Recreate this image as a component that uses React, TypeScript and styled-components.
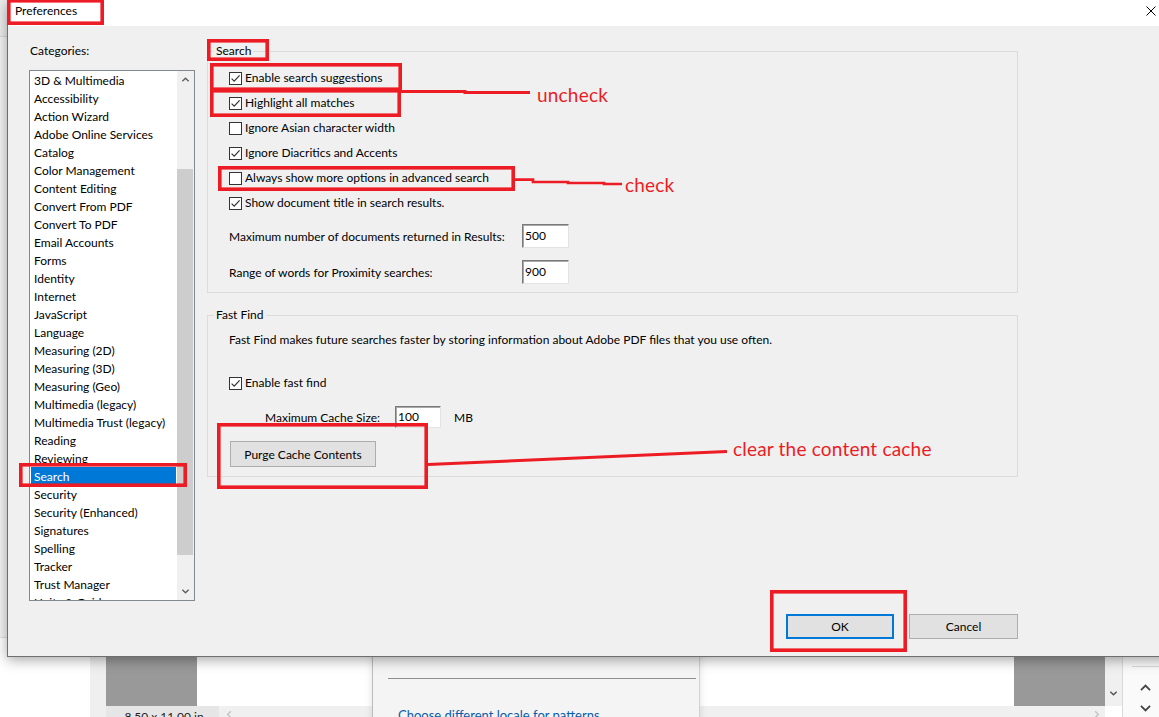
import React from 'react';
import styled, { createGlobalStyle } from 'styled-components';

const UI_FONT = 'Lato, "Noto Sans", "Liberation Sans", sans-serif';
const MARK_RED = '#ed1c24';

const GlobalStyle = createGlobalStyle`
  html, body { margin: 0; padding: 0; }
  body {
    width: 1159px;
    height: 717px;
    overflow: hidden;
    background: #fff;
    color: #000;
    font-family: ${UI_FONT};
    font-size: 12px;
  }
  #root { width: 1159px; height: 717px; }
`;

type Dir = 'up' | 'down' | 'left' | 'right';

const chevronPaths: Record<Dir, string> = {
  up: 'M1.5 7 L5 3.5 L8.5 7',
  down: 'M1.5 3 L5 6.5 L8.5 3',
  left: 'M6.5 1.5 L3 5 L6.5 8.5',
  right: 'M3.5 1.5 L7 5 L3.5 8.5',
};

const Chevron = ({ dir, size = 9, color = '#606060', weight = 1.6 }: { dir: Dir; size?: number; color?: string; weight?: number }) => (
  <svg width={size} height={size} viewBox="0 0 10 10" fill="none">
    <path d={chevronPaths[dir]} stroke={color} strokeWidth={weight} />
  </svg>
);

/* ---------- the Acrobat window behind the dialog ---------- */

const Desktop = styled.div`
  position: relative;
  width: 1159px;
  height: 717px;
  overflow: hidden;
`;

const AppShell = styled.div`
  display: flex;
  height: 728px;
  background: #fff;
`;

const NavPane = styled.div`
  width: 90px;
  flex-shrink: 0;
  background: #fff;
  display: flex;
  flex-direction: column;
`;

const NavHeader = styled.div`
  height: 36px;
  background: #ececec;
  border-bottom: 1px solid #d6d6d6;
`;

const NavStrip = styled.div`
  height: 600px;
  background: #f4f4f4;
  border-bottom: 1px solid #e2e2e2;
`;

const NavGutter = styled.div`
  width: 16px;
  flex-shrink: 0;
  background: #efefef;
`;

const DocView = styled.div`
  position: relative;
  flex: 1;
  min-width: 0;
  display: flex;
  flex-direction: column;
  background: #fff;
`;

const PageRow = styled.div`
  flex: 1;
  display: flex;
  justify-content: space-between;
  align-items: flex-end;
`;

const PageSheet = styled.div`
  width: 91px;
  height: 180px;
  background: #999;
`;

const DocStatus = styled.div`
  height: 22px;
  display: flex;
  align-items: flex-start;
  background: #f0f0f0;
`;

const SizeTag = styled.div`
  width: 113px;
  height: 100%;
  background: #e6e6e6;
  font-size: 12px;
  line-height: 16px;
  padding: 3px 0 0 3px;
  box-sizing: border-box;
  text-align: center;
  color: #222;
`;

const StatusArrow = styled.div<{ $end?: boolean }>`
  display: flex;
  padding-top: 4px;
  margin: ${p => (p.$end ? '0 4px 0 auto' : '0 0 0 6px')};
`;

const SidePanel = styled.div`
  position: absolute;
  left: 266px;
  top: 0;
  bottom: 0;
  width: 328px;
  box-sizing: border-box;
  background: #f4f4f4;
  border-left: 1px solid #bdbdbd;
  border-right: 1px solid #d2d2d2;
  box-shadow: 0 0 8px rgba(0, 0, 0, 0.12);
  display: flex;
  flex-direction: column;
  justify-content: flex-end;
  padding: 0 3px 4px 15px;
`;

const PanelRule = styled.div`
  border-top: 1px solid #8f8f8f;
  margin-bottom: 27px;
`;

const PanelLink = styled.div`
  padding-left: 10px;
  font-size: 13px;
  line-height: 18px;
  color: #0b5cad;
`;

const VScroll = styled.div`
  width: 17px;
  flex-shrink: 0;
  display: flex;
  flex-direction: column;
`;

const VTrack = styled.div`
  flex: 1;
  background: #f0f0f0;
  display: flex;
  flex-direction: column;
  justify-content: flex-end;
  align-items: center;
  padding-bottom: 4px;
`;

const VCorner = styled.div`
  height: 22px;
  background: #fff;
`;

const RightRail = styled.div`
  width: 37px;
  flex-shrink: 0;
  box-sizing: border-box;
  border-left: 1px solid #dadada;
  background: #fafafa;
  display: flex;
  flex-direction: column;
  justify-content: flex-end;
  align-items: center;
  padding-bottom: 13px;
`;

const RailIcon = styled.div`
  width: 22px;
  height: 20px;
  box-sizing: border-box;
  border: 2px solid #5b5bd6;
  margin-left: 10px;
`;

const RailRule = styled.div`
  align-self: stretch;
  margin: 12px 0 6px 9px;
  border-top: 1px solid #d8d8d8;
`;

const RailButton = styled.div`
  height: 14px;
  display: flex;
  align-items: center;
  justify-content: center;
  margin-top: 7px;
  margin-left: 8px;
`;

/* ---------- Preferences dialog ---------- */

const Dialog = styled.div`
  position: absolute;
  left: 7px;
  top: 0;
  width: 1168px;
  height: 657px;
  box-sizing: border-box;
  border: 1px solid #6f6f6f;
  border-top: none;
  background: #f0f0f0;
  box-shadow: 0 3px 12px rgba(0, 0, 0, 0.35);
  display: flex;
  flex-direction: column;
`;

const TitleBar = styled.div`
  height: 26px;
  flex-shrink: 0;
  background: #fff;
  display: flex;
  align-items: flex-start;
`;

const TitleText = styled.div`
  padding: 3px 0 0 7px;
  font-size: 12px;
  line-height: 16px;
`;

const CloseButton = styled.div`
  margin-left: auto;
  width: 46px;
  height: 22px;
  display: flex;
  align-items: center;
  justify-content: center;
`;

const DialogBody = styled.div`
  flex: 1;
  min-height: 0;
  display: grid;
  grid-template-columns: 166px 811px;
  grid-template-rows: 1fr auto;
  column-gap: 12px;
  padding: 17px 0 17px 21px;
`;

const CategoryColumn = styled.div`
  display: flex;
  flex-direction: column;
`;

const PlainLabel = styled.div`
  font-size: 12px;
  line-height: 16px;
`;

const CategoryCaption = styled(PlainLabel)`
  padding-left: 1px;
  margin-bottom: 11px;
`;

const CategoryList = styled.div`
  width: 166px;
  height: 531px;
  box-sizing: border-box;
  border: 1px solid #828790;
  background: #fff;
  display: flex;
  overflow: hidden;
`;

const ListItems = styled.div`
  flex: 1;
  min-width: 0;
`;

const ListItem = styled.div<{ $selected?: boolean }>`
  height: 17px;
  line-height: 17px;
  padding: 1px 0 0 3px;
  margin: 0 1px;
  white-space: nowrap;
  font-size: 12px;
  background: ${p => (p.$selected ? '#0078d7' : 'transparent')};
  color: ${p => (p.$selected ? '#fff' : '#000')};
`;

const ListScrollbar = styled.div`
  width: 17px;
  flex-shrink: 0;
  background: #f0f0f0;
  display: flex;
  flex-direction: column;
`;

const ScrollButton = styled.div`
  height: 17px;
  display: flex;
  align-items: center;
  justify-content: center;
`;

const ScrollThumb = styled.div`
  margin: 81px 1px 0 0;
  height: 386px;
  background: #cdcdcd;
`;

const ScrollSpacer = styled.div`
  flex: 1;
`;

const SettingsColumn = styled.div`
  display: flex;
  flex-direction: column;
`;

const GroupBox = styled.fieldset<{ $gap?: number }>`
  margin: ${p => p.$gap ?? 0}px 0 0 0;
  border: 1px solid #dcdcdc;
  padding: 0 0 ${p => (p.$gap ? 9 : 8)}px 6px;
  min-width: 0;
`;

const GroupTitle = styled.legend`
  padding: 0 2px;
  font-size: 12px;
  line-height: 16px;
`;

const GroupBody = styled.div<{ $top: number }>`
  display: flex;
  flex-direction: column;
  align-items: flex-start;
  padding: ${p => p.$top}px 0 0 15px;
`;

const CheckRow = styled.div<{ $gap?: number }>`
  display: flex;
  align-items: center;
  gap: 3px;
  height: 25px;
  margin-top: ${p => p.$gap ?? 0}px;
  font-size: 12px;
`;

const Box = styled.span`
  width: 13px;
  height: 13px;
  box-sizing: border-box;
  border: 1px solid #333;
  background: #fff;
  display: inline-flex;
  align-items: center;
  justify-content: center;
  flex-shrink: 0;
  margin-top: 1px;
`;

const FieldRow = styled.div<{ $gap: number; $indent?: number; $height: number }>`
  display: flex;
  align-items: center;
  height: ${p => p.$height}px;
  margin-top: ${p => p.$gap}px;
  padding-left: ${p => p.$indent ?? 0}px;
  font-size: 12px;
`;

const FieldLabel = styled.span<{ $width: number }>`
  width: ${p => p.$width}px;
  flex-shrink: 0;
  white-space: nowrap;
`;

const NumberBox = styled.div<{ $width: number; $height: number }>`
  width: ${p => p.$width}px;
  height: ${p => p.$height}px;
  box-sizing: border-box;
  background: #fff;
  border: 1px solid;
  border-color: #7a7a7a #e3e3e3 #e3e3e3 #7a7a7a;
  box-shadow: inset 1px 1px 0 #a8a8a8;
  display: flex;
  align-items: center;
  padding: 0 0 1px 2px;
  font-size: 12px;
`;

const Unit = styled.span`
  margin-left: 13px;
`;

const Description = styled(PlainLabel)`
  white-space: nowrap;
`;

const PushButton = styled.div<{ $width: number; $default?: boolean }>`
  width: ${p => p.$width}px;
  height: ${p => (p.$default ? 25 : 26)}px;
  box-sizing: border-box;
  background: #e1e1e1;
  border: ${p => (p.$default ? '2px solid #0078d7' : '1px solid #adadad')};
  display: flex;
  align-items: center;
  justify-content: center;
  font-size: 12px;
`;

const PurgeButton = styled(PushButton)`
  margin: 13px 0 0 1px;
`;

const DialogFooter = styled.div`
  grid-column: 2;
  display: flex;
  justify-content: flex-end;
  gap: 15px;
`;

const FooterButton = styled(PushButton)`
  height: 25px;
`;

/* ---------- red markup drawn over the screenshot ---------- */

const Markup = styled.svg`
  position: absolute;
  left: 0;
  top: 0;
  width: 1159px;
  height: 717px;
  pointer-events: none;
`;

const MarkLabel = styled.span<{ $x: number; $y: number }>`
  position: absolute;
  left: ${p => p.$x}px;
  top: ${p => p.$y}px;
  font-size: 19px;
  line-height: 19px;
  letter-spacing: 0.2px;
  color: ${MARK_RED};
  white-space: nowrap;
`;

const categories = [
  '3D & Multimedia',
  'Accessibility',
  'Action Wizard',
  'Adobe Online Services',
  'Catalog',
  'Color Management',
  'Content Editing',
  'Convert From PDF',
  'Convert To PDF',
  'Email Accounts',
  'Forms',
  'Identity',
  'Internet',
  'JavaScript',
  'Language',
  'Measuring (2D)',
  'Measuring (3D)',
  'Measuring (Geo)',
  'Multimedia (legacy)',
  'Multimedia Trust (legacy)',
  'Reading',
  'Reviewing',
  'Search',
  'Security',
  'Security (Enhanced)',
  'Signatures',
  'Spelling',
  'Tracker',
  'Trust Manager',
  'Units & Guides',
];

const searchOptions = [
  { label: 'Enable search suggestions', checked: true },
  { label: 'Highlight all matches', checked: true },
  { label: 'Ignore Asian character width', checked: false },
  { label: 'Ignore Diacritics and Accents', checked: true },
  { label: 'Always show more options in advanced search', checked: false },
  { label: 'Show document title in search results.', checked: true },
];

// outer edges [left, top, right, bottom] of the hand-drawn boxes
const markBoxes: [number, number, number, number][] = [
  [7, -1, 104, 25],
  [207, 39, 269, 61],
  [210, 63, 402, 91],
  [210, 89, 401, 117],
  [218, 166, 515, 191],
  [19, 463, 187, 487],
  [217, 423, 428, 489],
  [770, 590, 907, 652],
];

const MARK_W = 3.6;

const CheckBox = ({ checked, label, gap }: { checked: boolean; label: string; gap?: number }) => (
  <CheckRow $gap={gap}>
    <Box>
      {checked && (
        <svg width="11" height="11" viewBox="0 0 11 11" fill="none">
          <path d="M1.6 5.6 L4.2 8.2 L9.6 2.4" stroke="#333" strokeWidth="1.2" />
        </svg>
      )}
    </Box>
    <span>{label}</span>
  </CheckRow>
);

export default function App() {
  return (
    <Desktop>
      <GlobalStyle />
      <AppShell>
        <NavPane>
          <NavHeader />
          <NavStrip />
        </NavPane>
        <NavGutter />
        <DocView>
          <PageRow>
            <PageSheet />
            <PageSheet />
          </PageRow>
          <DocStatus>
            <SizeTag>8.50 x 11.00 in</SizeTag>
            <StatusArrow>
              <Chevron dir="left" color="#c4c4c4" />
            </StatusArrow>
            <StatusArrow $end>
              <Chevron dir="right" color="#c4c4c4" />
            </StatusArrow>
          </DocStatus>
          <SidePanel>
            <PanelRule />
            <PanelLink>Choose different locale for patterns</PanelLink>
          </SidePanel>
        </DocView>
        <VScroll>
          <VTrack>
            <ScrollButton>
              <Chevron dir="down" color="#555" />
            </ScrollButton>
          </VTrack>
          <VCorner />
        </VScroll>
        <RightRail>
          <RailIcon />
          <RailRule />
          <RailButton>
            <Chevron dir="up" size={13} color="#444" weight={1.4} />
          </RailButton>
          <RailButton>
            <Chevron dir="down" size={13} color="#444" weight={1.4} />
          </RailButton>
        </RightRail>
      </AppShell>

      <Dialog>
        <TitleBar>
          <TitleText>Preferences</TitleText>
          <CloseButton>
            <svg width="10" height="10" viewBox="0 0 10 10">
              <path d="M0.5 0.5 L9.5 9.5 M9.5 0.5 L0.5 9.5" stroke="#000" strokeWidth="1" />
            </svg>
          </CloseButton>
        </TitleBar>

        <DialogBody>
          <CategoryColumn>
            <CategoryCaption>Categories:</CategoryCaption>
            <CategoryList>
              <ListItems>
                {categories.map(name => (
                  <ListItem key={name} $selected={name === 'Search'}>
                    {name}
                  </ListItem>
                ))}
              </ListItems>
              <ListScrollbar>
                <ScrollButton>
                  <Chevron dir="up" />
                </ScrollButton>
                <ScrollThumb />
                <ScrollSpacer />
                <ScrollButton>
                  <Chevron dir="down" />
                </ScrollButton>
              </ListScrollbar>
            </CategoryList>
          </CategoryColumn>

          <SettingsColumn>
            <GroupBox>
              <GroupTitle>Search</GroupTitle>
              <GroupBody $top={6}>
                {searchOptions.map(o => (
                  <CheckBox key={o.label} checked={o.checked} label={o.label} />
                ))}
                <FieldRow $gap={9} $height={24}>
                  <FieldLabel $width={293}>Maximum number of documents returned in Results:</FieldLabel>
                  <NumberBox $width={47} $height={24}>500</NumberBox>
                </FieldRow>
                <FieldRow $gap={12} $height={24}>
                  <FieldLabel $width={293}>Range of words for Proximity searches:</FieldLabel>
                  <NumberBox $width={47} $height={24}>900</NumberBox>
                </FieldRow>
              </GroupBody>
            </GroupBox>

            <GroupBox $gap={14}>
              <GroupTitle>Fast Find</GroupTitle>
              <GroupBody $top={9}>
                <Description>
                  Fast Find makes future searches faster by storing information about Adobe PDF files that you use often.
                </Description>
                <CheckBox checked label="Enable fast find" gap={22} />
                <FieldRow $gap={11} $indent={36} $height={22}>
                  <FieldLabel $width={130}>Maximum Cache Size:</FieldLabel>
                  <NumberBox $width={46} $height={22}>100</NumberBox>
                  <Unit>MB</Unit>
                </FieldRow>
                <PurgeButton $width={146}>Purge Cache Contents</PurgeButton>
              </GroupBody>
            </GroupBox>
          </SettingsColumn>

          <DialogFooter>
            <FooterButton $width={108} $default>
              OK
            </FooterButton>
            <FooterButton $width={109}>Cancel</FooterButton>
          </DialogFooter>
        </DialogBody>
      </Dialog>

      <Markup viewBox="0 0 1159 717" fill="none" stroke={MARK_RED}>
        {markBoxes.map(([l, t, r, b]) => (
          <rect
            key={`${l}-${t}`}
            x={l + MARK_W / 2}
            y={t + MARK_W / 2}
            width={r - l - MARK_W}
            height={b - t - MARK_W}
            strokeWidth={MARK_W}
          />
        ))}
        <polyline points="400,91.5 465,91.5 465,92.5 530,92.5" strokeWidth="3" />
        <polyline points="515,179.7 533,179.7 533,182 568,182 568,183 604,183 604,184 622,184" strokeWidth="2.7" />
        <line x1="428" y1="464.5" x2="727" y2="451.5" strokeWidth="3" />
      </Markup>
      <MarkLabel $x={537} $y={85}>uncheck</MarkLabel>
      <MarkLabel $x={625} $y={175}>check</MarkLabel>
      <MarkLabel $x={733} $y={439}>clear the content cache</MarkLabel>
    </Desktop>
  );
}
